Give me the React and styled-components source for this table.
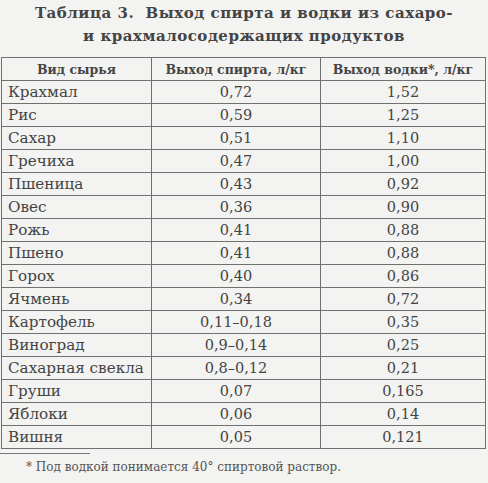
import React from "react";
import styled, { createGlobalStyle } from "styled-components";

const Global = createGlobalStyle`
  html, body { margin: 0; padding: 0; background: #f3f3f1; }
  body { width: 488px; height: 483px; overflow: hidden; }
`;

const Page = styled.div`
  width: 488px;
  height: 483px;
  background: #f3f3f1;
  color: #3c3c3c;
  font-family: "DejaVu Serif", "Liberation Serif", serif;
  box-sizing: border-box;
  padding-top: 2px;
`;

const Title = styled.h1`
  margin: 0;
  text-align: center;
  font-size: 15px;
  line-height: 23px;
  font-weight: bold;
  color: #444;
  letter-spacing: 0.5px;
`;

const Table = styled.table`
  margin: 9px 0 0 1px;
  width: 484px;
  border-collapse: collapse;
  table-layout: fixed;
  border: 1.5px solid #5e5e5e;
`;

const HeadCell = styled.th`
  height: 22px;
  padding: 0;
  border: 1px solid #707070;
  font-size: 12.5px;
  font-weight: bold;
  color: #444;
  text-align: center;
  vertical-align: middle;
`;

const Cell = styled.td`
  height: 22px;
  padding: 0 ${(p) => (p.$left ? "6px" : "0")};
  border: 1px solid #707070;
  font-size: ${(p) => (p.$left ? "15.2px" : "14.5px")};
  color: #444;
  text-align: ${(p) => (p.$left ? "left" : "center")};
  vertical-align: middle;
  white-space: nowrap;
`;

const Rule = styled.div`
  width: 90px;
  height: 1px;
  background: #777;
  margin-top: 4px;
`;

const Note = styled.p`
  margin: 6px 0 0 26px;
  font-size: 12px;
  color: #555;
`;

const rows = [
  ["Крахмал", "0,72", "1,52"],
  ["Рис", "0,59", "1,25"],
  ["Сахар", "0,51", "1,10"],
  ["Гречиха", "0,47", "1,00"],
  ["Пшеница", "0,43", "0,92"],
  ["Овес", "0,36", "0,90"],
  ["Рожь", "0,41", "0,88"],
  ["Пшено", "0,41", "0,88"],
  ["Горох", "0,40", "0,86"],
  ["Ячмень", "0,34", "0,72"],
  ["Картофель", "0,11–0,18", "0,35"],
  ["Виноград", "0,9–0,14", "0,25"],
  ["Сахарная свекла", "0,8–0,12", "0,21"],
  ["Груши", "0,07", "0,165"],
  ["Яблоки", "0,06", "0,14"],
  ["Вишня", "0,05", "0,121"],
];

export default function App() {
  return (
    <Page>
      <Global />
      <Title>
        Таблица 3.&nbsp; Выход спирта и водки из сахаро-
        <br />и крахмалосодержащих продуктов
      </Title>
      <Table>
        <colgroup>
          <col style={{ width: 150 }} />
          <col style={{ width: 169 }} />
          <col style={{ width: 165 }} />
        </colgroup>
        <thead>
          <tr>
            <HeadCell>Вид сырья</HeadCell>
            <HeadCell>Выход спирта, л/кг</HeadCell>
            <HeadCell>Выход водки*, л/кг</HeadCell>
          </tr>
        </thead>
        <tbody>
          {rows.map((r) => (
            <tr key={r[0]}>
              <Cell $left>{r[0]}</Cell>
              <Cell>{r[1]}</Cell>
              <Cell>{r[2]}</Cell>
            </tr>
          ))}
        </tbody>
      </Table>
      <Rule />
      <Note>* Под водкой понимается 40° спиртовой раствор.</Note>
    </Page>
  );
}
